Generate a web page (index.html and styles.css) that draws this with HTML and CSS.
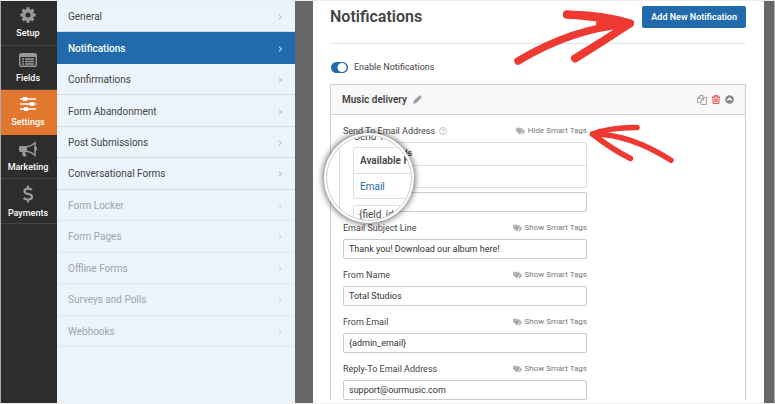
FILE: index.html
```html
<!DOCTYPE html>
<html lang="en">
<head>
<meta charset="utf-8">
<meta name="viewport" content="width=device-width, initial-scale=1">
<title>Notifications</title>
<link rel="stylesheet" href="styles.css">
</head>
<body>
<svg class="defs" aria-hidden="true">
  <symbol id="tags" viewBox="0 0 18 14"><path d="M0 2v4.500l6.500 6.500q.8.7 1.600 0l4.800-4.800q.7-.8 0-1.600L7 .5H1.500Q0 .5 0 2z" fill="currentColor"/><path d="M9.500 1.500l6.500 5.500q.8.800 0 1.600L12 13" fill="none" stroke="currentColor" stroke-width="2.600"/><circle cx="3.200" cy="3.400" r="1" fill="#fff"/></symbol>
  <symbol id="chev" viewBox="0 0 5 6"><path d="M1 .8L3.600 3 1 5.200" fill="none" stroke="currentColor"/></symbol>
</svg>
<div class="app">
  <nav class="rail" aria-label="Builder">
    <a href="#"><svg width="16" height="16" viewBox="0 0 16 16"><circle cx="8" cy="8" r="4.200" fill="none" stroke="currentColor" stroke-width="3.400"/><path d="M8 .3v3M8 12.700v3M.3 8h3M12.700 8h3M2.600 2.600l2 2M11.400 11.400l2 2M2.600 13.400l2-2M11.400 4.600l2-2" stroke="currentColor" stroke-width="3.200"/></svg><span>Setup</span></a>
    <a href="#"><svg width="18" height="16" viewBox="0 0 18 16"><rect x=".7" y="1.700" width="16.600" height="12.600" rx="1.500" fill="none" stroke="currentColor" stroke-width="1.400"/><path d="M1 3.500h16" stroke="currentColor" stroke-width="3"/><path d="M3 7h2M6 7h9M3 9.500h2M6 9.500h9M3 12h2M6 12h9" stroke="currentColor" stroke-width="1.300"/></svg><span>Fields</span></a>
    <a href="#" class="on"><svg width="16" height="16" viewBox="0 0 16 16"><path d="M0 3h16M0 8h16M0 13h16" stroke="currentColor" stroke-width="1.500"/><path d="M3 1h4v4H3zM10 6h4v4h-4zM4 11h4v4H4z" fill="currentColor"/></svg><span>Settings</span></a>
    <a href="#"><svg width="18" height="16" viewBox="0 0 18 16"><path d="M1.500 5H8v6H6.200q.2 2.500 1.400 4-2 1-3.800 0Q3 13 3.200 11H1.500Q0 11 0 9.500v-3Q0 5 1.500 5z" fill="currentColor"/><path d="M8 5.700q4.500-.7 8-4v12.600q-3.500-3.300-8-4" fill="none" stroke="currentColor" stroke-width="1.500"/><path d="M17 6v3.500" stroke="currentColor" stroke-width="2"/></svg><span>Marketing</span></a>
    <a href="#"><svg width="12" height="18" viewBox="0 0 12 18"><path d="M10 5Q8.700 3.600 6 3.600 2.500 3.600 2.500 6.200 2.500 8.200 6 8.900q4 .8 4 3.100 0 2.500-4 2.500-2.800 0-4.400-1.600M6 .5v3.300M6 14.300v3.200" fill="none" stroke="currentColor" stroke-width="2.200"/></svg><span>Payments</span></a>
  </nav>
  <nav class="menu" aria-label="Settings">
    <div class="menu-list">
      <a href="#">General<svg><use href="#chev"/></svg></a>
      <a href="#" class="on">Notifications<svg><use href="#chev"/></svg></a>
      <a href="#">Confirmations<svg><use href="#chev"/></svg></a>
      <a href="#">Form Abandonment<svg><use href="#chev"/></svg></a>
      <a href="#">Post Submissions<svg><use href="#chev"/></svg></a>
      <a href="#">Conversational Forms<svg><use href="#chev"/></svg></a>
      <a href="#" class="off">Form Locker<svg><use href="#chev"/></svg></a>
      <a href="#" class="off">Form Pages<svg><use href="#chev"/></svg></a>
      <a href="#" class="off">Offline Forms<svg><use href="#chev"/></svg></a>
      <a href="#" class="off">Surveys and Polls<svg><use href="#chev"/></svg></a>
      <a href="#" class="off">Webhooks<svg><use href="#chev"/></svg></a>
    </div>
  </nav>
  <main class="stage">
    <div class="panel">
      <header class="top">
        <h1>Notifications</h1>
        <button class="add" type="button">Add New Notification</button>
      </header>
      <label class="enable"><input type="checkbox" checked>Enable Notifications</label>
      <section class="card">
        <header class="card-head">
          <h2>Music delivery</h2>
          <button type="button" class="icon edit" aria-label="Rename"><svg width="9" height="9" viewBox="0 0 10 10"><path d="M.3 9.700l.6-3.200L6.700 .8q.9-.8 1.700 0l.8.8q.8.800 0 1.700L3.500 9z" fill="currentColor"/><path d="M6 1.800l2.200 2.200" stroke="#f8f8f8" stroke-width=".7"/></svg></button>
          <div class="tools">
            <button type="button" class="icon" aria-label="Duplicate"><svg width="10" height="10" viewBox="0 0 10 10"><path d="M3.500 7.500H.5v-4l2.500-3h3v2M.5 3.500H3v-3M6.500 2.500h3v7h-5.500V5zM4 5h2.500V2.500" fill="none" stroke="currentColor" stroke-width=".9"/></svg></button>
            <button type="button" class="icon del" aria-label="Delete"><svg width="8" height="9" viewBox="0 0 8 9"><path d="M0 2h8M2.600 1.800V.6h2.800v1.200M1 2v6.400h6V2M2.900 3.500v3.500M4 3.500v3.500M5.100 3.500v3.500" fill="none" stroke="currentColor" stroke-width=".9"/></svg></button>
            <button type="button" class="icon fold" aria-label="Collapse"><svg width="9" height="9" viewBox="0 0 9 9"><circle cx="4.500" cy="4.500" r="4.300" fill="currentColor"/><path d="M2.200 5.400L4.500 3.200l2.300 2.200" fill="none" stroke="#fff" stroke-width="1.300"/></svg></button>
          </div>
        </header>
        <div class="fields">
          <div class="field">
            <div class="line"><label for="to">Send To Email Address</label><svg class="help" viewBox="0 0 8 8"><circle cx="4" cy="4" r="3.500" fill="none" stroke="currentColor" stroke-width=".7"/><path d="M2.900 3.200q.1-1 1.100-1t1.100.9q0 .6-1.100 1.300v.5M4 5.400v.8" fill="none" stroke="currentColor" stroke-width=".7"/></svg><button type="button" class="smart"><svg><use href="#tags"/></svg>Hide Smart Tags</button></div>
            <div class="dropdown"><strong>Available Fields</strong><a href="#">Email</a></div>
            <input id="to" type="text">
            <div class="lens" aria-hidden="true">
              <div class="lens-view">
                <span class="lens-label">Send To</span>
                <div class="lens-box"><strong>Available Fields</strong><span>Email</span></div>
                <div class="lens-input">{field_id="1"}</div>
              </div>
            </div>
          </div>
          <div class="field">
            <div class="line"><label for="subject">Email Subject Line</label><button type="button" class="smart"><svg><use href="#tags"/></svg>Show Smart Tags</button></div>
            <input id="subject" type="text" value="Thank you! Download our album here!">
          </div>
          <div class="field">
            <div class="line"><label for="name">From Name</label><button type="button" class="smart"><svg><use href="#tags"/></svg>Show Smart Tags</button></div>
            <input id="name" type="text" value="Total Studios">
          </div>
          <div class="field">
            <div class="line"><label for="from">From Email</label><button type="button" class="smart"><svg><use href="#tags"/></svg>Show Smart Tags</button></div>
            <input id="from" type="text" value="{admin_email}">
          </div>
          <div class="field">
            <div class="line"><label for="reply">Reply-To Email Address</label><button type="button" class="smart"><svg><use href="#tags"/></svg>Show Smart Tags</button></div>
            <input id="reply" type="text" value="support@ourmusic.com">
          </div>
        </div>
      </section>
      <svg class="arrows" width="170" height="170" viewBox="510 0 170 170" aria-hidden="true">
        <g fill="none" stroke="#ee3932" stroke-linecap="round" stroke-linejoin="round">
          <path d="M518 61Q573 28 629 24" stroke-width="7.500"/>
          <path d="M567 14.500Q604 15 630 23.500Q602 42 575 58.500" stroke-width="8"/>
          <path d="M567 14.500Q604 17 630 23.500L600 24" stroke-width="8"/>
          <path d="M637 127.500Q612 127 592.500 134Q610 148 630.500 158.500" stroke-width="5.500"/>
          <path d="M592.500 134Q630 134 671 160.300" stroke-width="5.500"/>
        </g>
      </svg>
    </div>
  </main>
</div>
</body>
</html>
```
FILE: styles.css
```css
* { box-sizing: border-box; }
body { margin: 0; font-family: Roboto, "Liberation Sans", sans-serif; font-size: 9px; line-height: 12px; color: #444; }
h1, h2 { margin: 0; }
a { text-decoration: none; color: inherit; }
button { font: inherit; padding: 0; border: 0; background: none; color: inherit; }
.defs { display: none; }
.app {
  height: 100vh;
  display: grid;
  grid-template-columns: 56px 238px minmax(0, 1fr);
  border: 1px solid #eee;
  border-left-color: #aaa;
  border-right-color: #aaa;
  overflow: hidden;
}

.rail { background: #2d2d2d; color: #999; display: grid; grid-template-rows: repeat(5, 1fr); height: 100%; padding-bottom: 179px; }
.rail a { display: flex; flex-direction: column; align-items: center; justify-content: center; gap: 4px; padding: 1px 2px 0 0; border-bottom: 1px solid #444; }
.rail svg { flex: none; }
.rail span { color: #fff; font-weight: 500; font-size: 9px; line-height: 12px; }
.rail .on { background: #e27730; color: #fff; border-color: #e27730; }

.menu { background: #ebf3fc; font-size: 10px; }
.menu-list { display: grid; grid-template-rows: repeat(11, 1fr); height: 346px; }
.menu a { display: flex; align-items: center; justify-content: space-between; padding: 2px 12px 0 11px; border-bottom: 1px solid #d3dde8; color: #444; }
.menu a svg { width: 5px; height: 6px; color: #a7adb5; }
.menu .on, .menu .on svg { color: #fff; }
.menu .on { background: #216aab; font-weight: 500; border-color: #216aab; }
.menu .off { color: #a0a5ab; border-color: #dfe7f0; }
.menu .off svg { color: #c8cdd3; }

.stage { background: #676767; padding: 0 10px 0 18px; min-height: 0; }
.panel { position: relative; background: #fff; height: 100%; padding: 0 18px 0 17px; }
.top { display: flex; align-items: center; justify-content: space-between; height: 43px; padding-bottom: 11px; border-bottom: 1px solid #e4e4e4; }
.top h1 { font-size: 16px; line-height: 20px; font-weight: 600; }
.add { height: 22px; padding: 0 9px; background: #216aab; color: #fff; border-radius: 2px; font-size: 9px; font-weight: 600; }
.enable { display: flex; align-items: center; gap: 6px; height: 40px; padding: 6px 0 0 1px; }
.enable input { appearance: none; width: 17px; height: 11px; margin: 0; border-radius: 6px; background: radial-gradient(circle at 11px 50%, #fff 4px, #216aab 5px); }

.card { border: 1px solid #d0d0d0; border-bottom: 0; }
.card-head { display: flex; align-items: center; height: 30px; padding: 0 11px; background: #f8f8f8; border-bottom: 1px solid #d0d0d0; }
.card-head h2 { font-size: 10px; line-height: 12px; font-weight: 600; }
.icon { display: flex; align-items: center; color: #999; }
.edit { margin-left: 6px; }
.tools { display: flex; align-items: center; gap: 5px; margin-left: auto; }
.tools .del { color: #d63638; }
.tools .fold { color: #888; }

.fields { display: flex; flex-direction: column; gap: 10px; padding: 10px 12px 0; max-width: 268px; }
.field { position: relative; }
.line { display: flex; align-items: center; height: 12px; margin-bottom: 5px; }
.help { width: 8px; height: 8px; margin-left: 4px; color: #aaa; }
.smart { display: flex; align-items: center; gap: 3px; margin-left: auto; font-size: 8px; color: #777; }
.smart svg { width: 9px; height: 8px; color: #aaa; }
.field input { display: block; width: 100%; height: 20px; padding: 0 5px; border: 1px solid #ccc; border-radius: 2px; background: #fff; font: inherit; color: #333; }
.dropdown { border: 1px solid #ddd; border-radius: 2px; margin-bottom: 4px; }
.dropdown strong, .dropdown a { display: block; height: 22px; padding: 0 5px; line-height: 21px; font-weight: 600; }
.dropdown a { font-weight: 400; color: #216aab; border-top: 1px solid #ddd; }

.lens { position: absolute; left: -19px; top: 8px; width: 90px; height: 90px; padding: 2px; border-radius: 50%; background: #fff; box-shadow: 0 0 6px 1px #0009; }
.lens-view { height: 100%; border-radius: 50%; overflow: hidden; border: 1px solid #ccc; background: linear-gradient(90deg, #fff 12px, #ddd 12px, #ddd 13px, #fff 13px); font-size: 10px; }
.lens-label { display: block; height: 11px; padding-left: 27px; line-height: 2px; white-space: nowrap; }
.lens-box { width: 120px; margin: 0 0 6px 26px; border: 1px solid #ddd; border-radius: 2px; }
.lens-box strong, .lens-box span { display: block; height: 25px; padding-left: 6px; line-height: 25px; font-weight: 600; }
.lens-box span { font-weight: 400; color: #216aab; border-top: 1px solid #ddd; }
.lens-input { width: 120px; height: 24px; margin-left: 26px; padding-left: 5px; line-height: 18px; border: 1px solid #ddd; border-radius: 2px; }
.arrows { position: absolute; top: -1px; right: 84px; pointer-events: none; }
```
